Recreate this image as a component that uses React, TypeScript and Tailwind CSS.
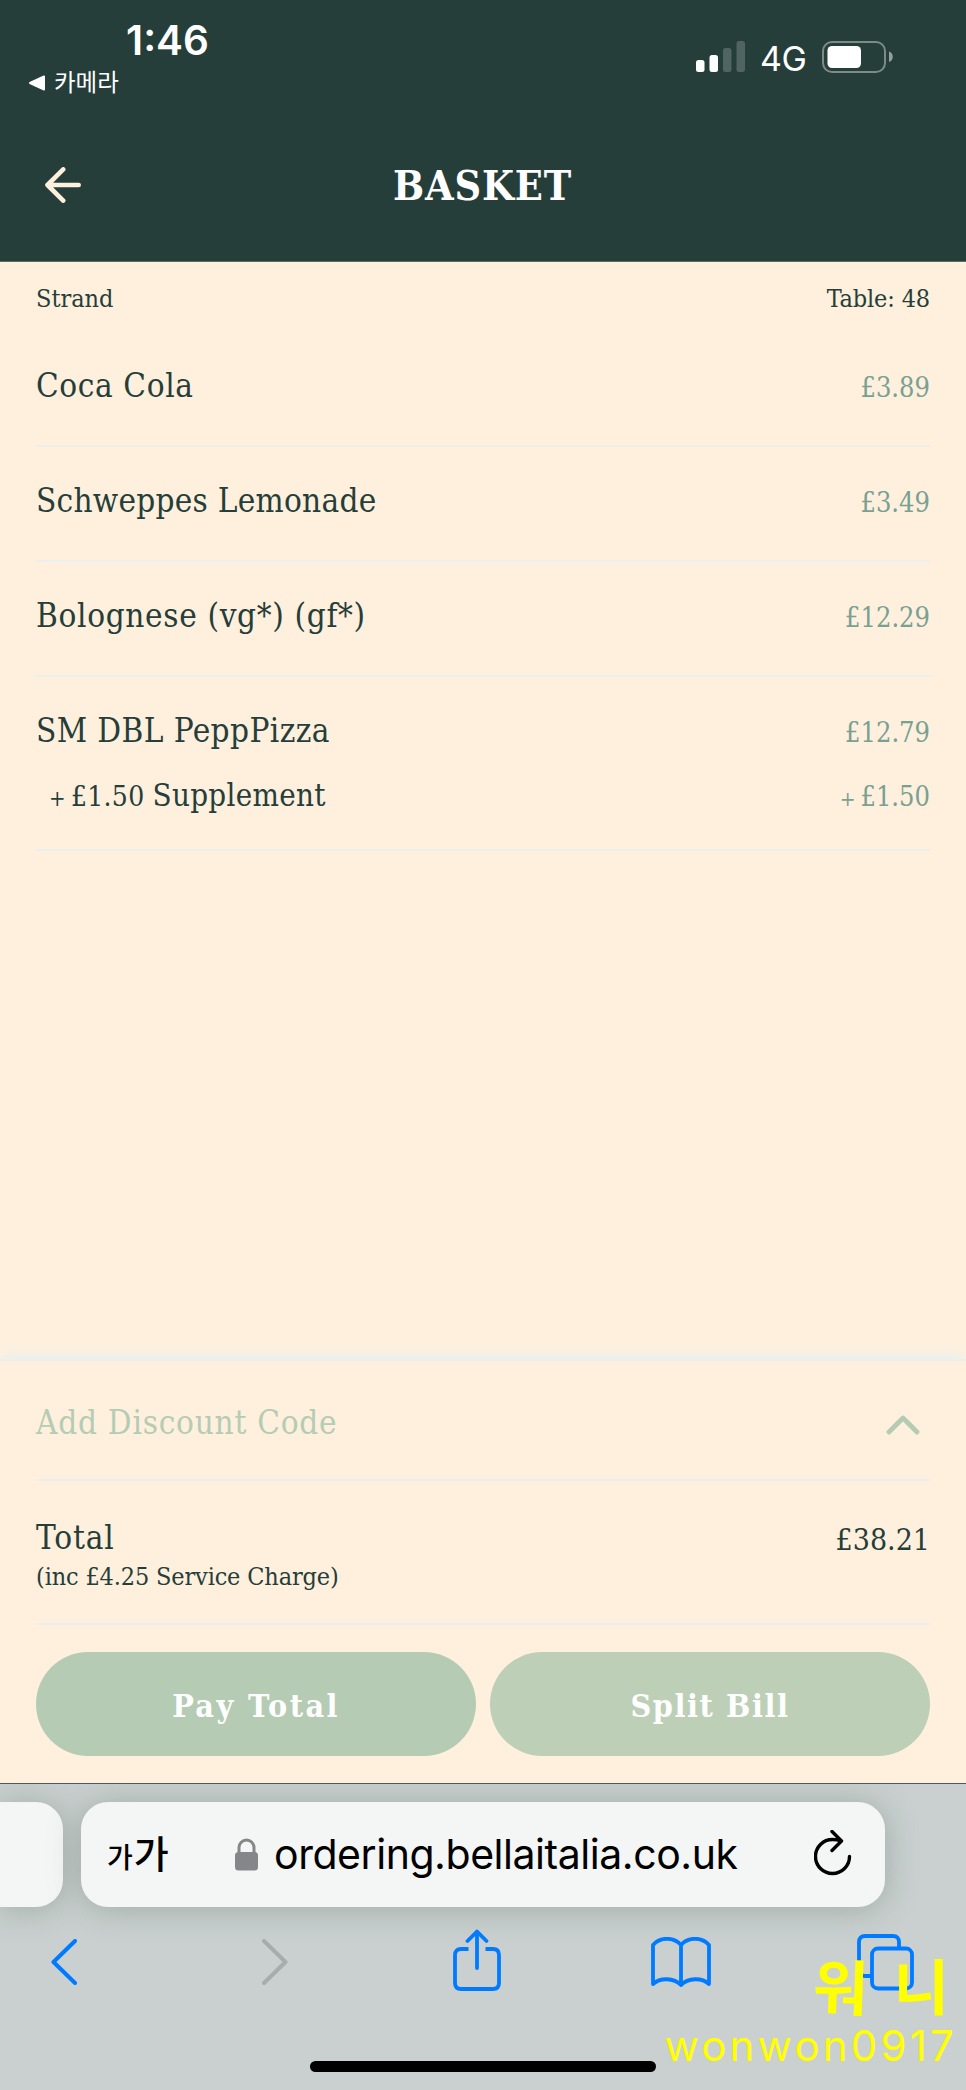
import type { ReactNode } from 'react'

type Item = { name: string; price: string; nameClass: string; extra?: { name: string; price: string } }

const ITEMS: Item[] = [
  { name: 'Coca Cola', price: '£3.89', nameClass: 'tracking-[0.6px]' },
  { name: 'Schweppes Lemonade', price: '£3.49', nameClass: 'tracking-[0.25px]' },
  { name: 'Bolognese (vg*) (gf*)', price: '£12.29', nameClass: 'tracking-[0.65px]' },
  {
    name: 'SM DBL PeppPizza',
    price: '£12.79',
    nameClass: 'tracking-[0.4px]',
    extra: { name: 'Supplement', price: '£1.50' },
  },
]

export default function App() {
  return (
    <div className="relative flex h-[2090px] w-[966px] flex-col overflow-hidden bg-[#fff0dd] font-['DejaVu_Serif_Condensed','DejaVu_Serif',serif] text-[#253e3a]">
      <header className="h-[262px] shrink-0 border-b border-[#5a6c66] bg-[#253e3a] text-white">
        <StatusBar />
        <div className="flex h-[150px] items-center pl-[45px] pr-[82px]">
          <svg width="36" height="36" viewBox="0 0 36 36" fill="none" stroke="#fff0dd" strokeWidth="4.6" strokeLinecap="round" strokeLinejoin="round">
            <path d="M33.7 18H2.5M18.2 2.4 2.5 18l15.7 15.6" />
          </svg>
          <h1 className="flex-1 pt-[3px] text-center text-[41px] font-bold leading-none tracking-[0.8px]">BASKET</h1>
        </div>
      </header>

      <main className="flex-1 px-9">
        <div className="flex h-[70px] items-center justify-between pt-[4px] text-[25px]">
          <span>Strand</span>
          <span className="tracking-[-0.15px]">Table: 48</span>
        </div>
        {ITEMS.map((item) => <BasketRow key={item.name} item={item} />)}
      </main>

      <section className="h-[422px] shrink-0 bg-[#fff0dd] px-9 shadow-[0_-2px_1px_#e9f0ef,0_-10px_12px_-3px_#e9f0ee]">
        <div className="flex h-[120px] items-center justify-between border-b-2 border-[#ebf0ee] pt-[5px] text-[33px] text-[#b5ccb4]">
          <span className="tracking-[0.75px]">Add Discount Code</span>
          <svg className="mr-[10px] mt-1" width="34" height="20" viewBox="0 0 34 20" fill="none" stroke="currentColor" strokeWidth="4.8" strokeLinecap="round" strokeLinejoin="round">
            <path d="M3 17 17 3l14 14" />
          </svg>
        </div>
        <div className="flex h-[144px] justify-between border-b-2 border-[#ebf0ee] pt-[35px]">
          <div>
            <p className="text-[33px] leading-[44px] tracking-[0.9px]">Total</p>
            <p className="text-[25px] leading-[34px] tracking-[-0.15px]">(inc £4.25 Service Charge)</p>
          </div>
          <p className="text-[30px] leading-[47px]">£38.21</p>
        </div>
        <div className="mt-[27px] flex gap-[14px]">
          <PillButton className="bg-[#b5cbb4] tracking-[2.4px]">Pay Total</PillButton>
          <PillButton className="bg-[#bdcfb7] tracking-[1.6px]">Split Bill</PillButton>
        </div>
      </section>

      <BrowserBar />
      <Signature />
    </div>
  )
}

function StatusBar() {
  return (
    <div className="flex h-[110px] justify-between pl-[29px] pr-[72px] font-['Inter','Noto_Sans_CJK_KR',sans-serif]">
      <div className="pt-[17px]">
        <p className="pl-[97px] text-[40.5px] font-semibold leading-[47px]">1:46</p>
        <div className="mt-[3px] flex items-center gap-[9px]">
          <svg width="16" height="16" viewBox="0 0 16 16" fill="white" stroke="white" strokeWidth="2" strokeLinejoin="round">
            <path d="M1 8 15 1.5v13z" />
          </svg>
          <span className="text-[23.5px] leading-[32px]">카메라</span>
        </div>
      </div>
      <div className="box-content flex h-[32px] items-end pt-[41px]">
        <svg width="50" height="32" viewBox="0 0 50 32" fill="white">
          <rect x="0" y="19" width="8.5" height="12" rx="2.5" />
          <rect x="13.5" y="14" width="8.5" height="17" rx="2.5" />
          <rect x="27" y="7" width="8.5" height="24" rx="2.5" opacity="0.2" />
          <rect x="40.5" y="0" width="8.5" height="31" rx="2.5" opacity="0.2" />
        </svg>
        <span className="ml-[14px] w-[46px] text-[34px] leading-[29px] tracking-[-0.5px]">4G</span>
        <svg className="ml-[16px]" width="72" height="32" viewBox="0 0 72 32">
          <rect x="1" y="1" width="62" height="30" rx="9" fill="none" stroke="white" strokeOpacity="0.4" strokeWidth="2" />
          <rect x="5.5" y="5" width="33.5" height="22" rx="4.5" fill="white" />
          <path d="M67 10.500v10.500c5-1.500 5-9 0-10.500z" fill="white" fillOpacity="0.5" />
        </svg>
      </div>
    </div>
  )
}

function BasketRow({ item }: { item: Item }) {
  return (
    <div className="border-b-2 border-[#ebf0ee] pb-[37px] pt-[32px] last:pb-[32px]">
      <div className="flex h-[44px] items-center justify-between">
        <span className={`text-[33px] ${item.nameClass}`}>{item.name}</span>
        <Price>{item.price}</Price>
      </div>
      {item.extra && (
        <div className="mt-[20px] flex h-[44px] items-center justify-between pl-[13px]">
          <span className="text-[31px] tracking-[0.3px]">
            <span className="text-[22px]">+</span>
            <span className="ml-[5px] text-[28px]">{item.extra.price}</span>
            <span className="ml-[8px]">{item.extra.name}</span>
          </span>
          <Price>
            <span className="mr-[5px] text-[21px]">+</span>
            {item.extra.price}
          </Price>
        </div>
      )}
    </div>
  )
}

function Price({ children }: { children: ReactNode }) {
  return <span className="pt-[4px] text-[27px] text-[#78a093]">{children}</span>
}

function PillButton({ className, children }: { className: string; children: ReactNode }) {
  return (
    <button className={`h-[104px] flex-1 rounded-full pt-[3px] text-[32px] font-bold text-white ${className}`}>
      {children}
    </button>
  )
}

function BrowserBar() {
  return (
    <footer className="relative h-[307px] shrink-0 overflow-hidden border-t border-[#4b5b57] bg-[#c9d0cf] pt-[18px] font-['Inter','Noto_Sans_CJK_KR',sans-serif] text-black">
      <div className="flex gap-[18px]">
        <div className="h-[105px] w-[63px] rounded-r-[27px] bg-[#f4f6f5] shadow-[0_2px_32px_rgba(100,115,105,0.4)]" />
        <div className="flex h-[105px] w-[804px] items-center rounded-[27px] bg-[#f4f6f5] pl-[26px] pr-[33px] shadow-[0_2px_32px_rgba(100,115,105,0.4)]">
          <span className="flex w-[128px] items-baseline font-medium">
            <span className="text-[28px]">가</span>
            <span className="ml-[1px] text-[38px]">가</span>
          </span>
          <svg width="23" height="33" viewBox="0 0 23 33">
            <path d="M4 15V9.500a7.500 7.500 0 0 1 15 0V15" fill="none" stroke="#85868a" strokeWidth="3" />
            <rect x="0" y="14" width="23" height="18.500" rx="3.500" fill="#85868a" />
          </svg>
          <span className="ml-[16px] flex-1 whitespace-nowrap text-[41px] tracking-[-0.45px]">ordering.bellaitalia.co.uk</span>
          <svg className="-mt-[3px]" width="38" height="46" viewBox="0 0 38 46" fill="none" stroke="black" strokeWidth="3.4" strokeLinecap="round" strokeLinejoin="round">
            <path d="M35.500 26.500A17 17 0 1 1 18.500 9.500c3 0 5.500.3 8.500 1.500M18 1.500l9.500 9.500-9.500 9.500" />
          </svg>
        </div>
      </div>

      <nav className="flex h-[110px] items-center pl-[51px] text-[#007aff]">
        <svg width="26" height="46" viewBox="0 0 26 46" fill="none" stroke="currentColor" strokeWidth="4" strokeLinecap="round" strokeLinejoin="round">
          <path d="M24 2 2.500 23 24 44" />
        </svg>
        <svg className="ml-[185px]" width="26" height="46" viewBox="0 0 26 46" fill="none" stroke="#a8adac" strokeWidth="4" strokeLinecap="round" strokeLinejoin="round">
          <path d="M2 2 23.500 23 2 44" />
        </svg>
        <svg className="-mt-[4px] ml-[165px]" width="48" height="62" viewBox="0 0 48 62" fill="none" stroke="currentColor" strokeWidth="3.800" strokeLinecap="round" strokeLinejoin="round">
          <path d="M15.500 20H8q-6 0-6 6v28q0 6 6 6h32q6 0 6-6V26q0-6-6-6h-7.500" strokeLinecap="butt" />
          <path d="M24 39V2.500M14.500 12 24 2.500l9.500 9.500" />
        </svg>
        <svg className="ml-[150px]" width="60" height="50" viewBox="0 0 60 50" fill="none" stroke="currentColor" strokeWidth="3.800" strokeLinecap="round" strokeLinejoin="round">
          <path d="M30 8C23-.3 9-.3 2 8v39c7-6.500 21-6.500 28 1 7-7.500 21-7.500 28-1V8C51-.3 37-.3 30 8v39" />
        </svg>
        <svg className="ml-[146px]" width="57" height="57" viewBox="0 0 57 57" fill="none" stroke="currentColor" strokeWidth="3.800">
          <path d="M42 14V8q0-6-6-6H8Q2 2 2 8v28q0 6 6 6h6" />
          <rect x="15" y="14.500" width="40" height="40" rx="6" />
        </svg>
      </nav>
      <div className="mx-auto mt-[44px] h-[11px] w-[346px] rounded-full bg-black" />
    </footer>
  )
}

// Author mark laid over the corner of the browser toolbar
function Signature() {
  return (
    <div className="absolute bottom-[14px] right-[9px] text-right font-['Inter','Noto_Sans_CJK_KR',sans-serif] text-[#ffff00]">
      <p className="flex justify-end gap-[26px] pr-[8px] text-[60px] font-bold leading-[56px]">
        <span className="rotate-2">워</span>
        <span>니</span>
      </p>
      <p className="text-[42px] font-normal leading-[60px] tracking-[3.2px]">wonwon0917</p>
    </div>
  )
}
